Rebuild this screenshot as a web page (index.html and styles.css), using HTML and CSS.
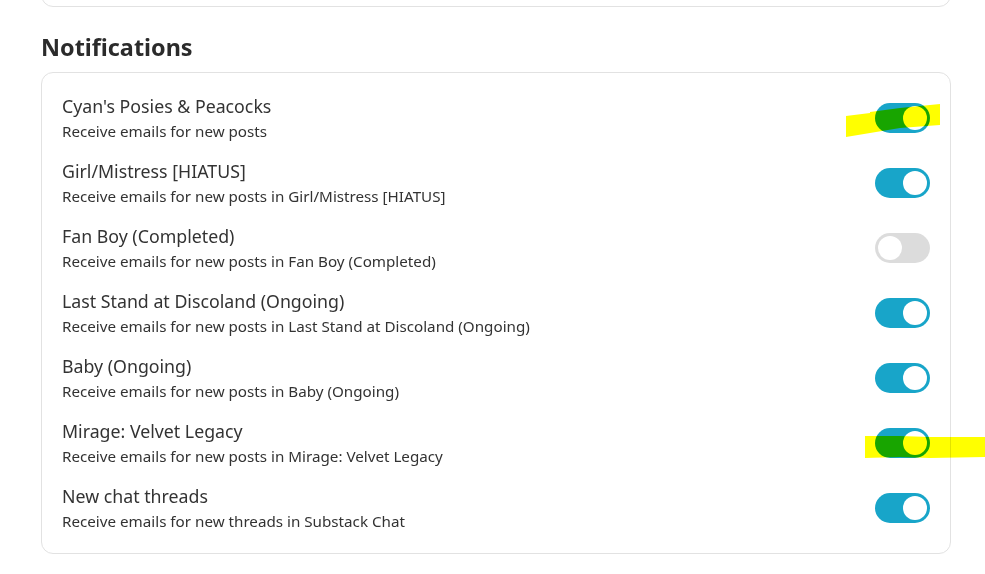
FILE: index.html
```html
<!DOCTYPE html>
<html lang="en">
<head>
<meta charset="utf-8">
<title>Notifications</title>
<link rel="stylesheet" href="styles.css">
</head>
<body>
<div class="page">
  <div class="card card-top"></div>
  <h2 class="section-title">Notifications</h2>
  <div class="card list">
    <div class="row">
      <div class="text"><div class="name">Cyan's Posies &amp; Peacocks</div><div class="desc">Receive emails for new posts</div></div>
      <span class="toggle on"><span class="knob"></span></span>
    </div>
    <div class="row">
      <div class="text"><div class="name">Girl/Mistress [HIATUS]</div><div class="desc">Receive emails for new posts in Girl/Mistress [HIATUS]</div></div>
      <span class="toggle on"><span class="knob"></span></span>
    </div>
    <div class="row">
      <div class="text"><div class="name">Fan Boy (Completed)</div><div class="desc">Receive emails for new posts in Fan Boy (Completed)</div></div>
      <span class="toggle off"><span class="knob"></span></span>
    </div>
    <div class="row">
      <div class="text"><div class="name">Last Stand at Discoland (Ongoing)</div><div class="desc">Receive emails for new posts in Last Stand at Discoland (Ongoing)</div></div>
      <span class="toggle on"><span class="knob"></span></span>
    </div>
    <div class="row">
      <div class="text"><div class="name">Baby (Ongoing)</div><div class="desc">Receive emails for new posts in Baby (Ongoing)</div></div>
      <span class="toggle on"><span class="knob"></span></span>
    </div>
    <div class="row">
      <div class="text"><div class="name">Mirage: Velvet Legacy</div><div class="desc">Receive emails for new posts in Mirage: Velvet Legacy</div></div>
      <span class="toggle on"><span class="knob"></span></span>
    </div>
    <div class="row">
      <div class="text"><div class="name">New chat threads</div><div class="desc">Receive emails for new threads in Substack Chat</div></div>
      <span class="toggle on"><span class="knob"></span></span>
    </div>
  </div>
</div>
<svg class="marker" width="985" height="574" viewBox="0 0 985 574" aria-hidden="true">
  <polygon points="846,116 870,113 870,112 900,108 920,106 940,104 940,125 900,128 870,133 846,137" />
  <polygon points="865,436 900,436 930,437 985,437 985,457 930,458 900,457 865,458" />
</svg>
</body>
</html>
```
FILE: styles.css
```css
* { box-sizing: border-box; }
html, body { margin: 0; padding: 0; background: #fff; }
body {
  width: 985px;
  height: 574px;
  overflow: hidden;
  position: relative;
  font-family: "Noto Sans", "Open Sans", sans-serif;
  color: #333;
}
.page {
  width: 910px;
  margin-left: 41px;
}
.card {
  border: 1px solid #e2e2e2;
  border-radius: 12px;
  background: #fff;
}
.card-top {
  height: 40px;
  margin-top: -33px;
}
.section-title {
  margin: 24px 0 0 0;
  font-size: 23.4px;
  line-height: 32px;
  font-weight: 700;
  color: #2b2b2b;
}
.list {
  margin-top: 9px;
  padding: 12px 20px 13px 20px;
  display: flex;
  flex-direction: column;
}
.row {
  height: 65px;
  display: flex;
  align-items: center;
  justify-content: space-between;
}
.text {
  display: flex;
  flex-direction: column;
  padding-top: 2px;
}
.name {
  font-size: 17.75px;
  line-height: 25px;
  color: #333;
}
.desc {
  font-size: 15.2px;
  line-height: 25px;
  color: #333;
}
.toggle {
  width: 55px;
  height: 30px;
  border-radius: 15px;
  display: flex;
  align-items: center;
  padding: 3px;
  flex: none;
}
.toggle.on { background: #18a5c9; justify-content: flex-end; }
.toggle.off { background: #dcdcdc; justify-content: flex-start; }
.knob {
  width: 24px;
  height: 24px;
  border-radius: 50%;
  background: #fff;
}
.marker {
  position: absolute;
  left: 0;
  top: 0;
  mix-blend-mode: multiply;
  pointer-events: none;
}
.marker polygon { fill: #ffff00; }
```
